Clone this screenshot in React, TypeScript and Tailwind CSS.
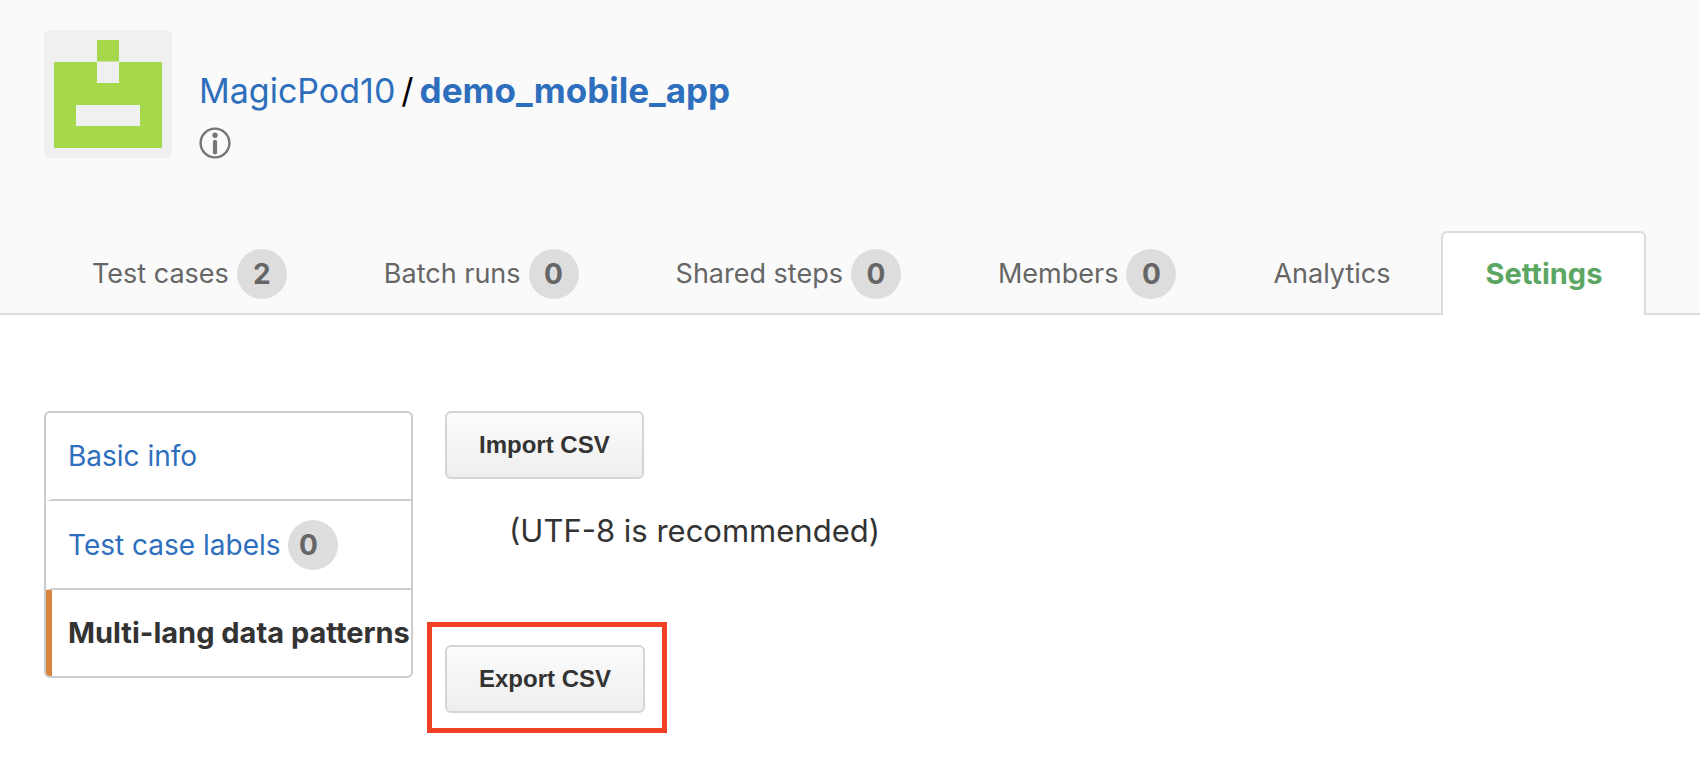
type Tab = { label: string; count?: number; active?: boolean };

const tabs: Tab[] = [
  { label: "Test cases", count: 2 },
  { label: "Batch runs", count: 0 },
  { label: "Shared steps", count: 0 },
  { label: "Members", count: 0 },
  { label: "Analytics" },
  { label: "Settings", active: true },
];

function Badge({ count, className = "" }: { count: number; className?: string }) {
  return (
    <span
      className={`flex size-[50px] shrink-0 items-center justify-center rounded-full bg-[#dddddd] text-[28px] font-bold text-[#666666] ${className}`}
    >
      {count}
    </span>
  );
}

function Avatar() {
  return (
    <svg viewBox="0 0 128 128" className="size-32 shrink-0" role="img" aria-label="Project avatar">
      <rect width="128" height="128" rx="6" fill="#f0f0f0" />
      <rect x="10" y="32" width="108" height="86" fill="#a6d84c" />
      <rect x="53" y="10" width="22" height="21.5" fill="#a6d84c" />
      <rect x="53" y="32" width="22" height="21" fill="#f0f0f0" />
      <rect x="32" y="75" width="64" height="21" fill="#f0f0f0" />
    </svg>
  );
}

function InfoIcon() {
  return (
    <svg viewBox="0 0 32 32" className="size-8" fill="none" aria-hidden="true">
      <circle cx="16" cy="16" r="14.4" stroke="#767676" strokeWidth="2.4" />
      <circle cx="16" cy="8.2" r="2.7" fill="#767676" />
      <path d="M16 14.8v10.6" stroke="#767676" strokeWidth="4.2" strokeLinecap="round" />
    </svg>
  );
}

function CsvButton({ children }: { children: string }) {
  return (
    <button
      type="button"
      className="h-[68px] rounded-md border-2 border-[#d5d5d5] bg-linear-to-b from-[#fcfcfc] to-[#eeeeee] px-8 pb-px font-['Liberation_Sans',Arial,sans-serif] text-[24px] leading-8 font-bold text-[#333333]"
    >
      {children}
    </button>
  );
}

export default function App() {
  return (
    <div className="min-h-screen bg-white font-[Inter,'Liberation_Sans',sans-serif] text-[27px] leading-10 text-[#333333]">
      <header className="border-b-2 border-[#dddddd] bg-[#fafafa] pt-[30px]">
        <div className="flex gap-[27px] px-11">
          <Avatar />
          <div className="pt-9">
            <h1 className="flex items-baseline gap-[6px] text-[34px] leading-[48px] text-black">
              <a href="#team" className="text-[#2e6fbd]">MagicPod10</a>
              <span>/</span>
              <a href="#project" className="text-[35px] font-bold text-[#2e6fbd]">demo_mobile_app</a>
            </h1>
            <button type="button" aria-label="Project information" className="mt-3 block">
              <InfoIcon />
            </button>
          </div>
        </div>
        <nav aria-label="Project" className="-mb-[2px] mt-[72px] flex gap-[5px] pl-[46px]">
          {tabs.map((tab) => (
            <a
              key={tab.label}
              href="#tab"
              aria-current={tab.active ? "page" : undefined}
              className={
                tab.active
                  ? "flex h-[84px] items-center rounded-t-md border-2 border-b-0 border-[#dddddd] bg-white px-[42px] text-[29px] font-bold text-[#5ba663]"
                  : "flex h-[84px] items-center gap-2 border-2 border-b-0 border-transparent px-11 text-[#666666]"
              }
            >
              {tab.label}
              {tab.count !== undefined && <Badge count={tab.count} />}
            </a>
          ))}
        </nav>
      </header>

      <main className="flex items-start gap-8 px-11 pt-24">
        <nav aria-label="Settings" className="w-[369px] shrink-0 overflow-hidden rounded-md border-2 border-[#cccccc] text-[28px] whitespace-nowrap">
          <a href="#basic" className="flex h-[88px] items-center border-b-2 border-l-6 border-[#cccccc] border-l-transparent pl-4 text-[#2e6fbd]">
            Basic info
          </a>
          <a href="#labels" className="flex h-[89px] items-center gap-[7px] border-b-2 border-l-6 border-[#cccccc] border-l-transparent pl-4 text-[#2e6fbd]">
            Test case labels
            <Badge count={0} className="pr-2" />
          </a>
          <a href="#patterns" aria-current="page" className="flex h-[86px] items-center border-l-6 border-[#d8843e] pl-4 text-[29px] font-bold text-[#333333]">
            Multi-lang data patterns
          </a>
        </nav>

        <section className="flex flex-col items-start">
          <CsvButton>Import CSV</CsvButton>
          <p className="mt-7 pl-16 text-[31px] leading-[48px]">(UTF-8 is recommended)</p>
          <div className="relative mt-[90px]">
            <CsvButton>Export CSV</CsvButton>
            <span className="pointer-events-none absolute -top-[23px] -right-[22px] -bottom-5 -left-[18px] border-5 border-[#ee4126]" />
          </div>
        </section>
      </main>
    </div>
  );
}
